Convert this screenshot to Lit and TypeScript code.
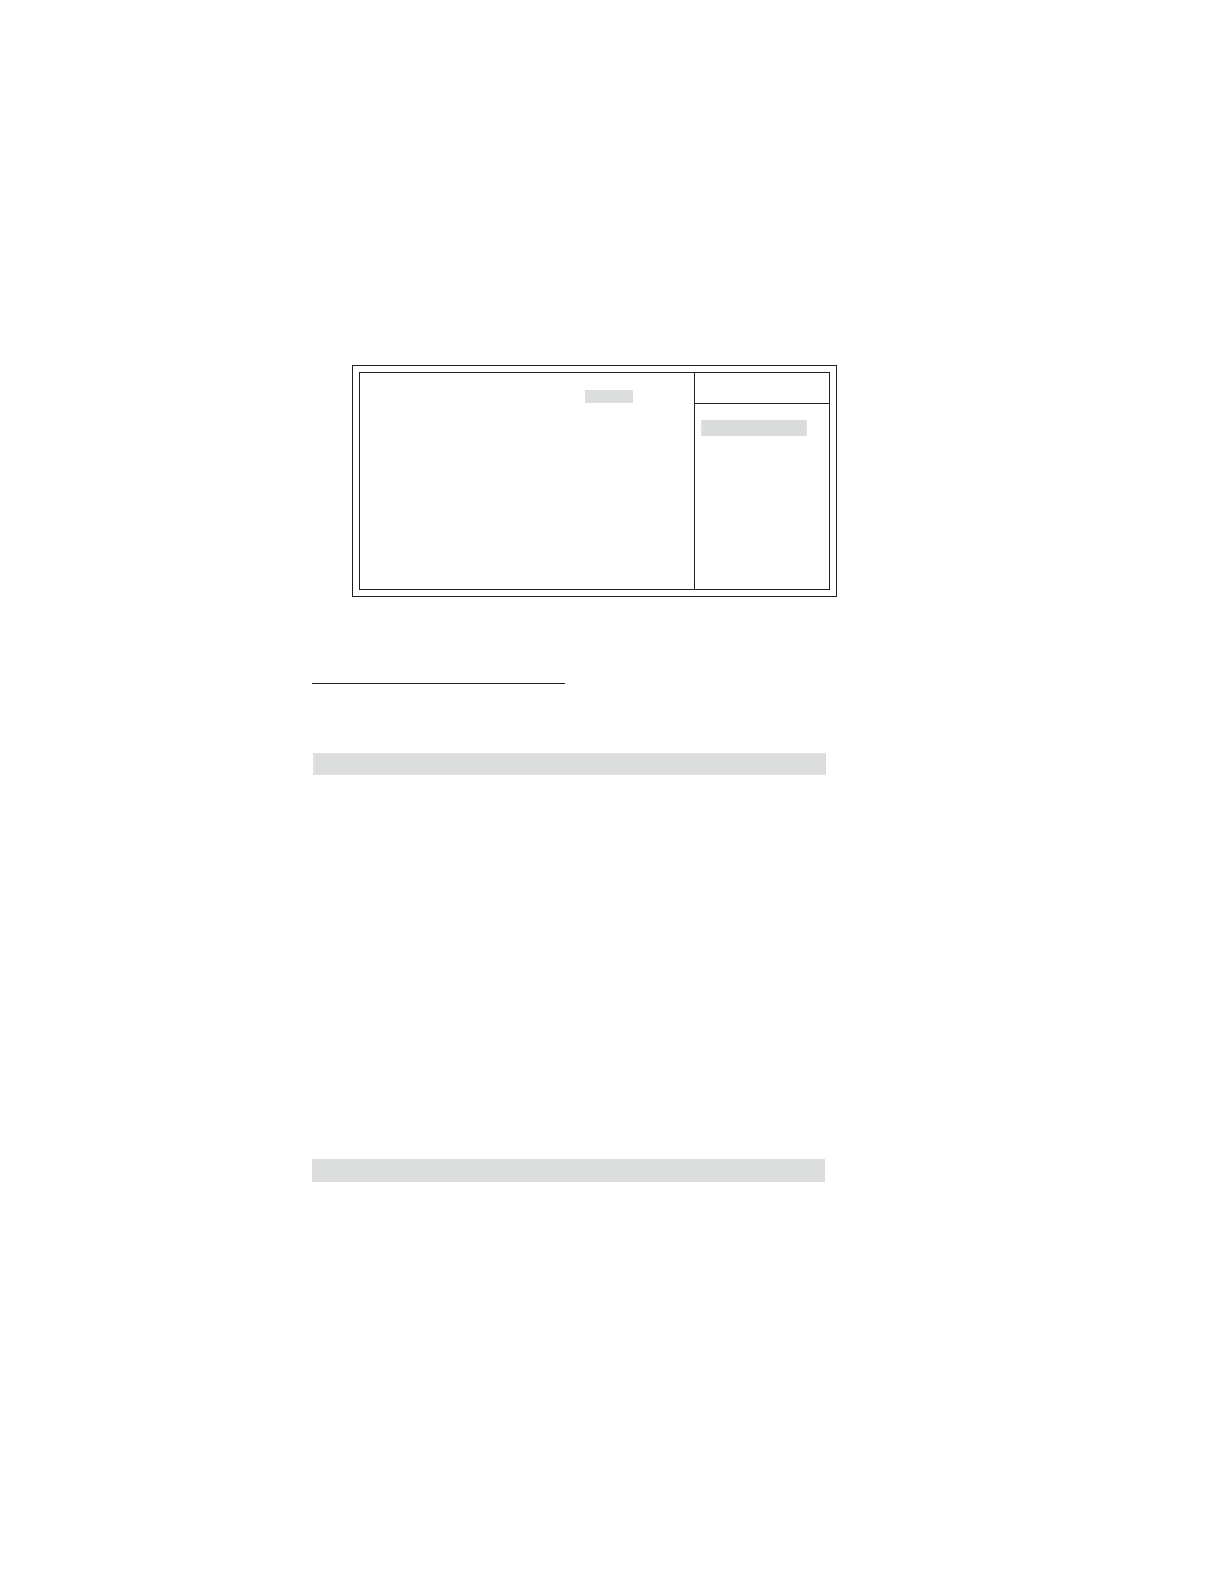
import { LitElement, html, css } from "lit";
import { customElement } from "lit/decorators.js";

@customElement("app-root")
export class AppRoot extends LitElement {
  static styles = css`
    :host {
      display: block;
      min-height: 100vh;
      background: #fff;
      font-family: "Liberation Sans", sans-serif;
    }
    * {
      box-sizing: border-box;
    }
    .page {
      max-width: 837px;
      padding: 365px 0 0 312px;
    }
    .frame {
      margin-left: 40px;
      padding: 6px;
      border: 1px solid #231f20;
    }
    .panel {
      display: grid;
      grid-template-columns: 1fr 135px;
      min-height: 218px;
      border: 1px solid #231f20;
    }
    .main {
      display: flex;
      justify-content: flex-end;
      align-items: flex-start;
      padding: 17px 61px 0 0;
    }
    .value {
      width: 48px;
      height: 13px;
      background: #dcdddd;
    }
    .side {
      border-left: 1px solid #231f20;
    }
    .head {
      height: 31px;
      border-bottom: 1px solid #231f20;
    }
    .option {
      width: 106px;
      height: 16px;
      margin: 16px 0 0 6px;
      border: solid #dfdfdf;
      border-width: 0 2px;
      background: #dadbdb;
    }
    .rule {
      width: 253px;
      height: 1px;
      margin: 86px 0 0;
      border: 0;
      background: #231f20;
    }
    .bar {
      height: 22px;
      margin: 69px 11px 0 1px;
      border: solid #dfe0df;
      border-width: 2px 0 2px 2px;
      background: #dbdddd;
    }
    .bar.lower {
      height: 23px;
      margin: 384px 12px 0 0;
      border: 0;
    }
  `;

  render() {
    return html`
      <main class="page">
        <section class="frame">
          <div class="panel">
            <div class="main"><div class="value"></div></div>
            <aside class="side">
              <div class="head"></div>
              <div class="option"></div>
            </aside>
          </div>
        </section>
        <hr class="rule" />
        <div class="bar"></div>
        <div class="bar lower"></div>
      </main>
    `;
  }
}
